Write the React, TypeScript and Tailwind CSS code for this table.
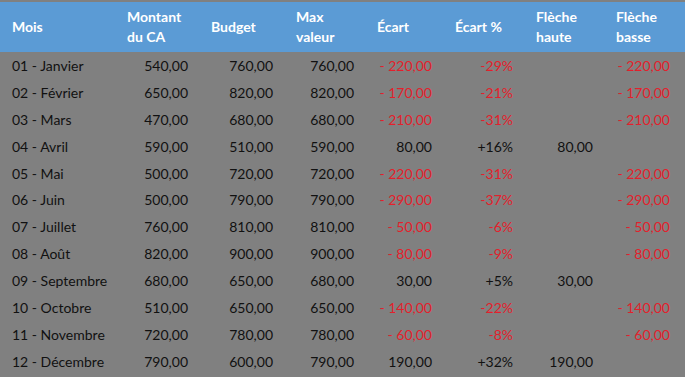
const rows = [
  ["01 - Janvier", "540,00", "760,00", "760,00", "- 220,00", "-29%", "", "- 220,00"],
  ["02 - Février", "650,00", "820,00", "820,00", "- 170,00", "-21%", "", "- 170,00"],
  ["03 - Mars", "470,00", "680,00", "680,00", "- 210,00", "-31%", "", "- 210,00"],
  ["04 - Avril", "590,00", "510,00", "590,00", "80,00", "+16%", "80,00", ""],
  ["05 - Mai", "500,00", "720,00", "720,00", "- 220,00", "-31%", "", "- 220,00"],
  ["06 - Juin", "500,00", "790,00", "790,00", "- 290,00", "-37%", "", "- 290,00"],
  ["07 - Juillet", "760,00", "810,00", "810,00", "- 50,00", "-6%", "", "- 50,00"],
  ["08 - Août", "820,00", "900,00", "900,00", "- 80,00", "-9%", "", "- 80,00"],
  ["09 - Septembre", "680,00", "650,00", "680,00", "30,00", "+5%", "30,00", ""],
  ["10 - Octobre", "510,00", "650,00", "650,00", "- 140,00", "-22%", "", "- 140,00"],
  ["11 - Novembre", "720,00", "780,00", "780,00", "- 60,00", "-8%", "", "- 60,00"],
  ["12 - Décembre", "790,00", "600,00", "790,00", "190,00", "+32%", "190,00", ""],
];

const headers = [
  ["Mois"],
  ["Montant", "du CA"],
  ["Budget"],
  ["Max", "valeur"],
  ["Écart"],
  ["Écart %"],
  ["Flèche", "haute"],
  ["Flèche", "basse"],
];

const grid = "grid grid-cols-[119px_84px_85px_81px_78px_81px_80px_77px]";

export default function App() {
  return (
    <div className="w-[685px] h-[377px] bg-[#808080] pt-[2px] overflow-hidden font-['Lato','Open_Sans',sans-serif] text-[14px]">
      {/* Header */}
      <div className={`${grid} h-[50px] bg-[#5b9bd5] text-white font-bold items-center`}>
        {headers.map((h, i) => (
          <div key={i} className={`${i === 0 ? "pl-[12px]" : "pl-[8px]"} leading-[20px]`}>
            {h.map((line) => (
              <div key={line}>{line}</div>
            ))}
          </div>
        ))}
      </div>

      {/* Rows */}
      {rows.map((r) => (
        <div key={r[0]} className={`${grid} h-[26.9px] items-center text-[#111]`}>
          {r.map((cell, i) => (
            <div
              key={i}
              className={`${i === 0 ? "pl-[12px]" : "text-right pr-[15px]"} ${
                cell.startsWith("-") ? "text-[#e3202c]" : ""
              }`}
            >
              {cell}
            </div>
          ))}
        </div>
      ))}
    </div>
  );
}
